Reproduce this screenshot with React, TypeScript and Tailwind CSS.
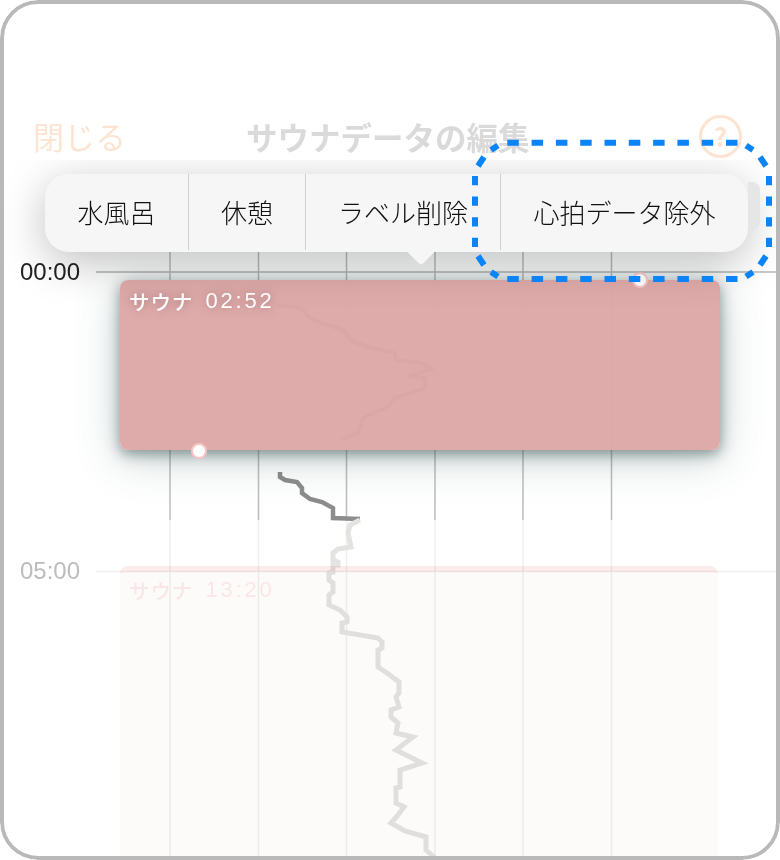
const JP = "font-['Noto_Sans_CJK_JP','Liberation_Sans',sans-serif]";

const GRID = [170, 258.5, 346.5, 435, 523, 611.5];

const HR_TOP = "M277 305L300 308L313 320L343 330L353 342L373 348L395 353L395 360L422 363L432 369L408 376L425 378L425 388L395 398L387 407L363 418L358 433L342 440";
const HR_DARK = "M280 472L280 477L285 480L297 482L302 488L302 493L310 499L322 502L333 508L333 518L360 519";
const HR_LIGHT = "M360 520L350 525L348 533L351 547L338 549L333 553L333 560L338 562L338 565L333 565L333 572L329 573L329 580L333 583L333 592L329 595L329 605L340 610L347 617L347 622L342 623L342 632L378 638L382 642L382 648L378 650L378 667L387 673L399 682L399 693L396 697L399 707L391 710L391 717L398 723L396 733L413 737L396 750L422 763L400 770L400 787L396 788L396 803L404 807L398 815L391 823L405 831L426 837L426 850L435 858";

const MENU = [
  { label: "水風呂", width: "w-[143px]" },
  { label: "休憩", width: "w-[117px]" },
  { label: "ラベル削除", width: "w-[195px]" },
  { label: "心拍データ除外", width: "w-[248px]" },
];

const CORNERS = [
  "M478 166L484 157",
  "M491 150L498 145.5",
  "M766 166L760 157",
  "M753 150L746 145.5",
  "M478 256L484 265",
  "M491 272L498 276.5",
  "M766 256L760 265",
  "M753 272L746 276.5",
];

function ChartLines() {
  return (
    <svg className="absolute inset-0 h-full w-full" viewBox="0 160 780 700" fill="none">
      <line x1="96" y1="272" x2="780" y2="272" stroke="#b4b6b6" strokeWidth="1.5" />
      <line x1="96" y1="571.5" x2="780" y2="571.5" stroke="#f2f0f0" strokeWidth="1.5" />
      {GRID.map((x) => (
        <g key={x}>
          <line x1={x} y1="210" x2={x} y2="520" stroke="#bcbcbc" strokeWidth="1.5" />
          <line x1={x} y1="520" x2={x} y2="860" stroke="#efefef" strokeWidth="1.5" />
        </g>
      ))}
      <path d={HR_TOP} stroke="#8c8c8c" strokeWidth="4" strokeLinejoin="round" />
      <path d={HR_DARK} stroke="#8c8c8c" strokeWidth="4.5" />
      <path d={HR_LIGHT} stroke="#e3e3e2" strokeWidth="5" />
    </svg>
  );
}

function Dot({ className }: { className: string }) {
  return (
    <div
      className={`absolute h-[16px] w-[16px] rounded-full border-2 border-[#f6c4c4] bg-white ${className}`}
    />
  );
}

function TimeLabel({ time, className }: { time: string; className: string }) {
  return (
    <span className={`font-['Liberation_Sans'] text-[24px] leading-[28px] ${className}`}>{time}</span>
  );
}

function BlockLabel({ time, className }: { time: string; className: string }) {
  return (
    <div className={`flex items-center gap-[12px] text-[20.5px] font-medium leading-[28px] tracking-[1px] ${className}`}>
      <span>サウナ</span>
      <span className="font-['Liberation_Sans'] text-[22px] tracking-[2.8px]">{time}</span>
    </div>
  );
}

export default function App() {
  return (
    <div
      className={`relative flex h-[860px] w-[780px] flex-col overflow-hidden rounded-[38px] bg-white ${JP}`}
    >
      {/* header */}
      <div className="flex h-[160px] shrink-0 items-center pl-[33px] pr-[38px] pt-[112px]">
        <span className="text-[31px] leading-[44px] text-[#fde4d2]">閉じる</span>
        <span className="ml-[120px] text-[31.5px] font-bold leading-[44px] text-[#dadada]">
          サウナデータの編集
        </span>
        <span className="ml-auto flex h-[43px] w-[43px] items-center justify-center rounded-full border-[3px] border-[#fde4d2] text-[26px] font-bold leading-none text-[#fde4d2]">
          ?
        </span>
      </div>

      {/* chart */}
      <div className="relative flex-1 overflow-hidden bg-white">
        <ChartLines />

        <div className="relative flex h-full">
          {/* time labels */}
          <div className="flex w-[120px] shrink-0 flex-col gap-[271px] pl-[20px] pt-[98px]">
            <TimeLabel time="00:00" className="text-[#222222]" />
            <TimeLabel time="05:00" className="text-[#bcbcbc]" />
          </div>

          {/* sauna blocks */}
          <div className="flex w-[600px] flex-col gap-[116px] pt-[120px]">
            <div className="relative h-[170px] shrink-0 rounded-[8px] bg-[rgba(222,167,167,0.97)] px-[9px] py-[8px] text-white shadow-[0_4px_14px_rgba(50,80,80,0.55),0_8px_44px_rgba(50,80,80,0.28)]">
              <BlockLabel time="02:52" className="-mt-[1px] [text-shadow:0_0_10px_rgba(110,80,80,0.55)]" />
              <Dot className="left-[71px] top-[163px]" />
              <Dot className="left-[512px] -top-[8px]" />
            </div>
            <div className="h-[300px] w-[598px] shrink-0 rounded-t-[8px] border-t-[6px] border-[#fcecec] bg-[#fcfbfa] px-[9px] pt-[4px] text-[#fbe6e6] mix-blend-multiply">
              <BlockLabel time="13:20" className="" />
            </div>
          </div>
        </div>

        {/* popup menu */}
        <div className="absolute left-[45px] top-[14px] h-[78px] w-[703px] rounded-[24px] bg-[#f6f6f6] shadow-[0_10px_44px_rgba(0,0,0,0.25)]">
          <div className="absolute left-[365px] top-[65px] h-[22px] w-[22px] rotate-45 rounded-[4px] bg-[#f6f6f6]" />
          <div className="relative flex h-full pb-[2px]">
            {MENU.map((item, i) => (
              <div
                key={item.label}
                className={`flex items-center justify-center text-[26px] font-light leading-none text-[#111111] ${item.width} ${
                  i > 0 ? "border-l border-[#cfcfcf]" : ""
                }`}
              >
                {item.label}
              </div>
            ))}
          </div>
        </div>
        <div className="absolute left-[748px] top-[22px] h-[48px] w-[12px] rounded-r-[8px] bg-[#e6e6e6]" />
      </div>

      {/* highlight */}
      <svg className="absolute inset-0 h-full w-full" viewBox="0 0 780 860" fill="none" stroke="#0a84f8" strokeWidth="6">
        <path d="M507.3 142.7H738" strokeDasharray="11.5 12.8" />
        <path d="M507.3 279H738" strokeDasharray="11.5 12.8" />
        <path d="M475 176V247" strokeDasharray="9.2 11.4" />
        <path d="M769 176V247" strokeDasharray="9.2 11.4" />
        {CORNERS.map((d) => (
          <path key={d} d={d} />
        ))}
      </svg>

      {/* device outline */}
      <div className="pointer-events-none absolute inset-0 rounded-[38px] border-4 border-[#b9b9b9]" />
    </div>
  );
}
